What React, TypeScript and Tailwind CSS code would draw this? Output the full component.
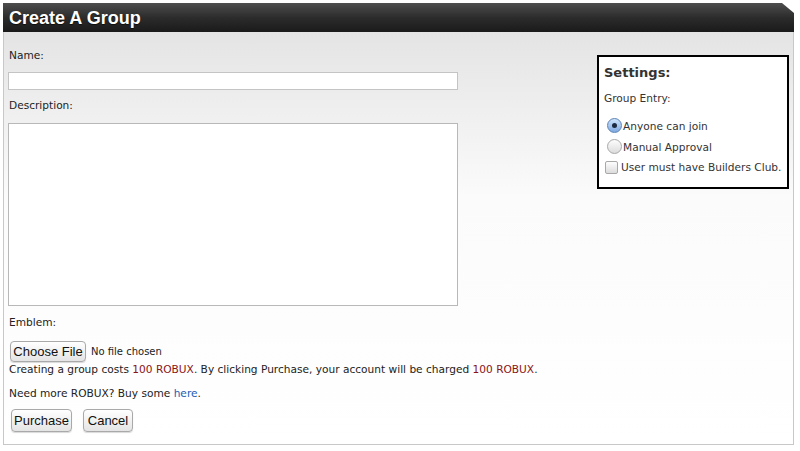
import React from "react";

function MacButton({ children, className = "" }: { children: React.ReactNode; className?: string }) {
  return (
    <button
      type="button"
      className={`rounded-[4px] border border-[#a9a9a9] bg-gradient-to-b from-[#ffffff] to-[#e4e4e4] font-['Liberation_Sans',Arial,sans-serif] text-[13px] leading-none text-[#111] shadow-[0_1px_1px_rgba(0,0,0,0.15)] ${className}`}
    >
      {children}
    </button>
  );
}

function Radio({ checked }: { checked?: boolean }) {
  return (
    <span
      className={`flex h-[15px] w-[15px] shrink-0 items-center justify-center rounded-full border ${
        checked
          ? "border-[#5d83b5] bg-gradient-to-b from-[#cfe3fb] to-[#7ea9e1]"
          : "border-[#a8a8a8] bg-gradient-to-b from-[#fdfdfd] to-[#dcdcdc]"
      }`}
    >
      {checked && <span className="h-[5px] w-[5px] rounded-full bg-[#1b2a3f]" />}
    </span>
  );
}

export default function App() {
  return (
    <div className="h-[451px] w-[800px] bg-white pl-[3px] pt-[3px] font-['DejaVu_Sans',Verdana,sans-serif] text-[10.6px] text-[#222]">
      <div className="w-[791px]">
        <div className="flex h-[29px] items-center bg-gradient-to-b from-[#4e4e4e] via-[#2c2c2c] to-[#1a1a1a] pl-[6px] [clip-path:polygon(0_0,calc(100%-12px)_0,100%_10px,100%_100%,0_100%)]">
          <h1 className="font-['Liberation_Sans',Arial,sans-serif] text-[18px] font-bold leading-none text-white [text-shadow:0_1px_1px_rgba(0,0,0,0.6)]">
            Create A Group
          </h1>
        </div>
        <div className="flex h-[413px] justify-between border-x border-b border-[#c8c8c8] bg-gradient-to-b from-[#e4e4e4] via-[#fbfbfb] via-40% to-white pl-[4px] pr-[4px]">
          <div className="w-[452px]">
            <div className="mt-[16px] pl-[1px] leading-[14px]">Name:</div>
            <input
              type="text"
              className="mt-[10px] block h-[18px] w-[450px] border border-[#c4c4c4] bg-white outline-none"
            />
            <div className="mt-[8px] pl-[1px] leading-[14px]">Description:</div>
            <textarea className="mt-[11px] block h-[183px] w-[450px] resize-none border border-[#b8b8b8] bg-white outline-none" />
            <div className="mt-[9px] pl-[1px] leading-[14px]">Emblem:</div>
            <div className="mt-[12px] flex items-center pl-[2px]">
              <MacButton className="h-[21px] w-[76px]">Choose File</MacButton>
              <span className="ml-[5px] text-[10px]">No file chosen</span>
            </div>
            <div className="whitespace-nowrap pl-[1px] leading-[14px]">
              Creating a group costs <span className="text-[#8a1414]">100 ROBUX</span>. By clicking Purchase, your account
              will be charged <span className="text-[#8a1414]">100 ROBUX</span>.
            </div>
            <div className="mt-[10px] whitespace-nowrap pl-[1px] leading-[14px]">
              Need more ROBUX? Buy some <a className="text-[#1d5cb5]">here</a>.
            </div>
            <div className="mt-[9px] flex gap-[11px] pl-[3px]">
              <MacButton className="h-[23px] w-[61px]">Purchase</MacButton>
              <MacButton className="h-[23px] w-[50px]">Cancel</MacButton>
            </div>
          </div>
          <div className="mt-[23px] h-[134px] w-[192px] border-2 border-black bg-white px-[5px] text-[#333]">
            <div className="mt-[7px] text-[13px] font-bold leading-[17px]">Settings:</div>
            <div className="mt-[10px] leading-[14px]">Group Entry:</div>
            <div className="mt-[13px] flex items-center gap-[1px] pl-[3px] leading-[14px]">
              <Radio checked />
              <span>Anyone can join</span>
            </div>
            <div className="mt-[6px] flex items-center gap-[1px] pl-[3px] leading-[14px]">
              <Radio />
              <span>Manual Approval</span>
            </div>
            <div className="mt-[6px] flex items-center gap-[3px] whitespace-nowrap pl-[1px] leading-[14px]">
              <span className="h-[13px] w-[13px] shrink-0 rounded-[2px] border border-[#a8a8a8] bg-gradient-to-b from-[#fdfdfd] to-[#dcdcdc]" />
              <span>User must have Builders Club.</span>
            </div>
          </div>
        </div>
      </div>
    </div>
  );
}
